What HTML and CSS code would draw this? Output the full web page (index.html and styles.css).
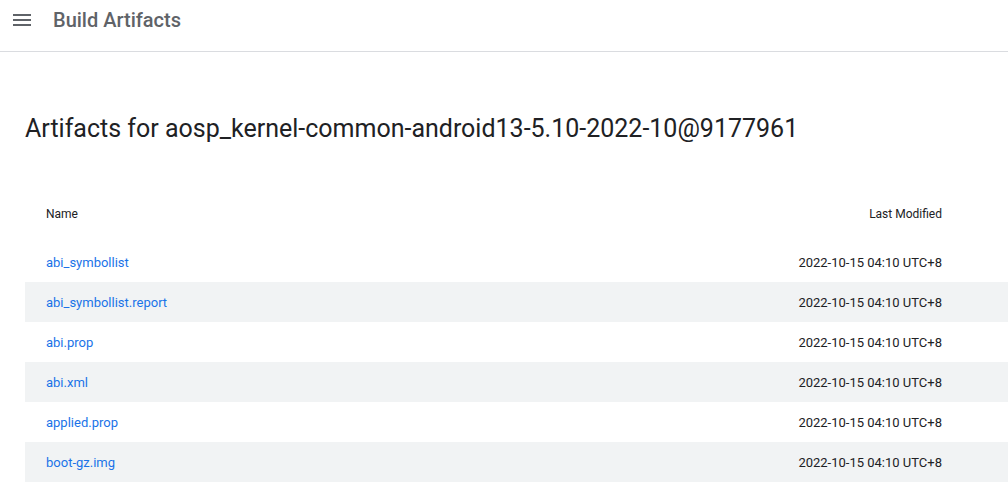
FILE: index.html
```html
<!DOCTYPE html>
<html>
<head>
<meta charset="utf-8">
<link rel="stylesheet" href="styles.css">
</head>
<body>
<header class="topbar">
  <svg class="menu-icon" width="24" height="24" viewBox="0 0 24 24"><path d="M3 18h18v-2H3v2zm0-5h18v-2H3v2zm0-7v2h18V6H3z" fill="#5f6368"/></svg>
  <span class="app-title">Build Artifacts</span>
</header>
<main class="content">
  <h1 class="page-title">Artifacts for aosp_kernel-common-android13-5.10-2022-10@9177961</h1>
  <table class="artifacts">
    <thead>
      <tr><th class="col-name">Name</th><th class="col-date">Last Modified</th></tr>
    </thead>
    <tbody>
      <tr><td class="col-name"><a href="#">abi_symbollist</a></td><td class="col-date">2022-10-15 04:10 UTC+8</td></tr>
      <tr class="alt"><td class="col-name"><a href="#">abi_symbollist.report</a></td><td class="col-date">2022-10-15 04:10 UTC+8</td></tr>
      <tr><td class="col-name"><a href="#">abi.prop</a></td><td class="col-date">2022-10-15 04:10 UTC+8</td></tr>
      <tr class="alt"><td class="col-name"><a href="#">abi.xml</a></td><td class="col-date">2022-10-15 04:10 UTC+8</td></tr>
      <tr><td class="col-name"><a href="#">applied.prop</a></td><td class="col-date">2022-10-15 04:10 UTC+8</td></tr>
      <tr class="alt"><td class="col-name"><a href="#">boot-gz.img</a></td><td class="col-date">2022-10-15 04:10 UTC+8</td></tr>
    </tbody>
  </table>
</main>
</body>
</html>
```
FILE: styles.css
```css
html, body {
  margin: 0;
  padding: 0;
  background: #fff;
  font-family: Roboto, "Liberation Sans", Arial, sans-serif;
  color: #202124;
  overflow: hidden;
}
.topbar {
  height: 51px;
  border-bottom: 1px solid #dadce0;
  display: flex;
  align-items: center;
  padding-left: 10px;
  box-sizing: content-box;
}
.menu-icon {
  display: block;
  margin-top: -11px;
}
.app-title {
  margin-left: 19px;
  margin-top: -11px;
  font-size: 20px;
  font-weight: 500;
  color: #5f6368;
}
.content {
  padding-left: 25px;
}
.page-title {
  margin: 0;
  padding-top: 61px;
  font-size: 25px;
  font-weight: 400;
  line-height: 32px;
  color: #202124;
}
.artifacts {
  margin-top: 41px;
  width: 100%;
  border-collapse: collapse;
  font-size: 13px;
}
.artifacts th {
  font-size: 12px;
  font-weight: 400;
  color: #202124;
  height: 56px;
  padding: 0 0 0 21px;
}
.artifacts td {
  height: 40px;
  padding: 0 0 0 21px;
  color: #202124;
}
.artifacts .col-name { text-align: left; }
.artifacts .col-date { text-align: right; padding-right: 66px; }
.artifacts tr.alt { background: #f1f3f4; }
.artifacts a {
  color: #1a73e8;
  text-decoration: none;
}
```
